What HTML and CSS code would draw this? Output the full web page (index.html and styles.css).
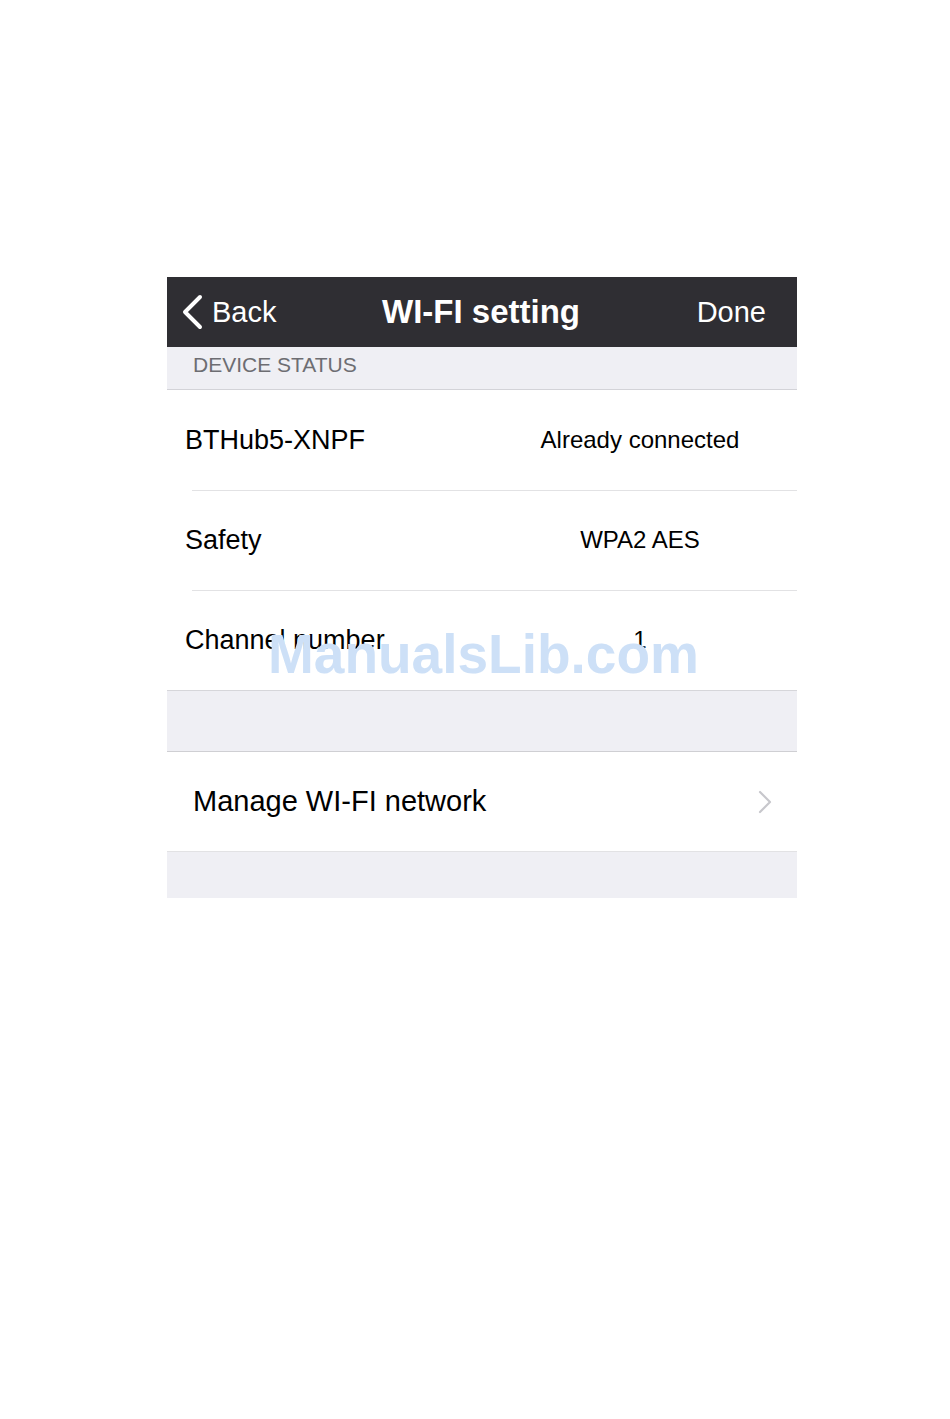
FILE: index.html
```html
<!DOCTYPE html>
<html lang="en">
<head>
    <meta charset="UTF-8">
    <meta name="viewport" content="width=device-width, initial-scale=1.0">
    <title>WI-FI setting</title>
    <link rel="stylesheet" href="styles.css">
</head>
<body>
    <div class="screen">
        <div class="nav-bar">
            <div class="nav-back">
                <svg class="back-icon" width="24" height="36" viewBox="0 0 24 36">
                    <path d="M20 3 L5 18 L20 33" fill="none" stroke="#fff" stroke-width="4" stroke-linecap="round" stroke-linejoin="round"/>
                </svg>
                <span>Back</span>
            </div>
            <div class="nav-title">WI-FI setting</div>
            <div class="nav-done">Done</div>
        </div>

        <div class="section-header">DEVICE STATUS</div>

        <div class="status-list">
            <div class="status-row">
                <span class="status-label">BTHub5-XNPF</span>
                <span class="status-value">Already connected</span>
            </div>
            <div class="status-row">
                <span class="status-label">Safety</span>
                <span class="status-value">WPA2 AES</span>
            </div>
            <div class="status-row">
                <span class="status-label">Channel number</span>
                <span class="status-value">1</span>
            </div>
        </div>

        <div class="spacer"></div>

        <div class="link-row">
            <span>Manage WI-FI network</span>
            <svg class="chevron" width="14" height="24" viewBox="0 0 14 24">
                <path d="M2 2 L12 12 L2 22" fill="none" stroke="#c7c7cc" stroke-width="2.2" stroke-linecap="round" stroke-linejoin="round"/>
            </svg>
        </div>

        <div class="footer-space"></div>

        <div class="watermark">ManualsLib.com</div>
    </div>
</body>
</html>
```

FILE: styles.css
```css
body {
    margin: 0;
    background-color: #fff;
    font-family: 'Liberation Sans', Arial, sans-serif;
    color: #000;
}

.screen {
    position: relative;
    width: 630px;
    margin: 277px 0 0 167px;
}

.nav-bar {
    display: grid;
    grid-template-columns: 1fr auto 1fr;
    align-items: center;
    height: 70px;
    padding: 0 31px 0 13px;
    background-color: #2f2e33;
    color: #fff;
}

.nav-back {
    display: flex;
    align-items: center;
    gap: 8px;
    font-size: 29px;
}

.back-icon {
    display: block;
}

.nav-title {
    font-size: 33px;
    font-weight: bold;
    padding-left: 16px;
}

.nav-done {
    text-align: right;
    font-size: 29px;
}

.section-header {
    height: 42px;
    line-height: 36px;
    padding-left: 26px;
    background-color: #efeff4;
    border-bottom: 1px solid #d3d3d8;
    color: #6d6d72;
    font-size: 21px;
}

.status-list {
    border-bottom: 1px solid #d6d6da;
}

.status-row {
    display: flex;
    align-items: center;
    height: 100px;
    padding: 0 47px 0 18px;
    font-size: 27px;
    position: relative;
}

.status-row + .status-row::before {
    content: "";
    position: absolute;
    top: 0;
    left: 25px;
    right: 0;
    border-top: 1px solid #e2e2e4;
}

.status-label {
    flex: 1;
}

.status-value {
    width: 220px;
    text-align: center;
    font-size: 24px;
}

.spacer {
    height: 60px;
    background-color: #efeff4;
    border-bottom: 1px solid #cfcfd3;
}

.link-row {
    display: flex;
    align-items: center;
    justify-content: space-between;
    height: 99px;
    padding: 0 25px 0 26px;
    border-bottom: 1px solid #e2e2e4;
    font-size: 29px;
}

.chevron {
    display: block;
}

.footer-space {
    height: 46px;
    background-color: #efeff4;
}

.watermark {
    position: absolute;
    left: 101px;
    top: 345px;
    font-size: 55px;
    font-weight: bold;
    color: #cde0f7;
    white-space: nowrap;
}
```
